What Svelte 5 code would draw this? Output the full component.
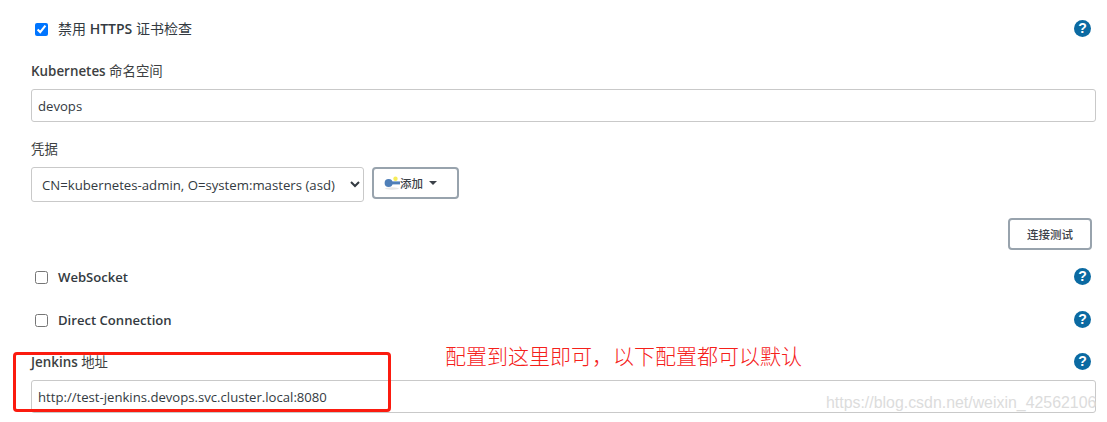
<script>
  const helpLabel = '?';
</script>

<div class="page">
  <div class="check-row first">
    <label class="check"><input type="checkbox" checked /><span class="big">禁用 <b>HTTPS</b> 证书检查</span></label>
    <span class="help">{helpLabel}</span>
  </div>

  <div class="field ns">
    <div class="label"><b>Kubernetes</b> 命名空间</div>
    <input class="text" type="text" value="devops" />
  </div>

  <div class="field cred">
    <div class="label">凭据</div>
    <div class="cred-row">
      <select class="sel">
        <option>CN=kubernetes-admin, O=system:masters (asd)</option>
      </select>
      <button class="btn add" type="button">
        <svg class="key" width="16" height="14" viewBox="0 0 16 14" aria-hidden="true">
          <ellipse cx="8" cy="12.5" rx="7" ry="1.2" fill="#e6e6e6" />
          <circle cx="4.6" cy="7" r="4" fill="#4f7fb8" />
          <rect x="6" y="5.4" width="10" height="3" fill="#4f7fb8" />
          <circle cx="11.5" cy="2.8" r="2.2" fill="#f6ec5a" />
        </svg><span>添加</span><i class="caret"></i>
      </button>
    </div>
  </div>

  <div class="test-row">
    <button class="btn test" type="button">连接测试</button>
  </div>

  <div class="check-row ws">
    <label class="check"><input type="checkbox" /><span class="strong">WebSocket</span></label>
    <span class="help">{helpLabel}</span>
  </div>

  <div class="check-row dc">
    <label class="check"><input type="checkbox" /><span class="strong">Direct Connection</span></label>
    <span class="help">{helpLabel}</span>
  </div>

  <div class="field jenkins">
    <div class="label-row">
      <div class="label"><b>Jenkins</b> 地址</div>
      <span class="help">{helpLabel}</span>
    </div>
    <input class="text" type="text" value="http://test-jenkins.devops.svc.cluster.local:8080" />
  </div>

  <div class="redbox"></div>
  <div class="note">配置到这里即可，以下配置都可以默认</div>
  <div class="mark">https://blog.csdn.net/weixin_42562106</div>
</div>

<style>
  :global(body) {
    margin: 0;
    background: #fff;
  }
  .page {
    position: relative;
    width: 1107px;
    height: 422px;
    box-sizing: border-box;
    padding: 0 11px 0 31px;
    overflow: hidden;
    font-family: "Open Sans", "Noto Sans CJK SC", sans-serif;
    font-size: 13px;
    color: #333a41;
  }
  b { font-weight: 600; }
  .check-row {
    display: flex;
    align-items: center;
    justify-content: space-between;
    height: 20px;
    padding-right: 5px;
  }
  .first { padding-top: 19px; }
  .check {
    display: flex;
    align-items: center;
    gap: 10px;
  }
  .check input {
    margin: 0 0 0 4px;
    width: 13px;
    height: 13px;
  }
  .big { font-size: 14px; font-weight: 400; margin-bottom: 2px; }
  .check .strong { font-weight: 600; font-size: 13.1px; }
  .help {
    width: 17px;
    height: 17px;
    margin-bottom: 2px;
    border-radius: 50%;
    background: #0b6aa2;
    color: #fff;
    font: 700 14px/17px "Liberation Sans", sans-serif;
    text-align: center;
  }
  .label {
    font-size: 13.4px;
    line-height: 20px;
    color: #3d3f42;
  }
  .label-row {
    display: flex;
    justify-content: space-between;
    align-items: center;
    padding-right: 5px;
    margin-bottom: 8px;
  }
  .ns .label, .cred .label { margin-bottom: 8px; }
  .ns { margin-top: 22px; }
  .cred { margin-top: 17px; }
  .text {
    display: block;
    box-sizing: border-box;
    width: 100%;
    height: 33px;
    padding: 0 6px;
    border: 1px solid #c9c9c9;
    border-radius: 3px;
    background: #fff;
    font: inherit;
    font-size: 13.13px;
    color: #333a41;
    outline: none;
  }
  .cred-row {
    display: flex;
    align-items: flex-start;
    gap: 8px;
  }
  .sel {
    box-sizing: border-box;
    width: 333px;
    height: 35px;
    padding: 0 6px;
    border: 1px solid #c9c9c9;
    border-radius: 3px;
    background-color: #fff;
    font: inherit;
    font-size: 13.2px;
    color: #333a41;
  }
  .btn {
    box-sizing: border-box;
    border: 2px solid #98a3ad;
    border-radius: 4px;
    background: #fff;
    font: 500 11.5px "Open Sans", "Noto Sans CJK SC", sans-serif;
    color: #3b4148;
    padding: 0;
  }
  .add {
    display: flex;
    align-items: center;
    width: 87px;
    height: 32px;
    padding-left: 10px;
  }
  .key { flex: none; }
  .caret {
    width: 0;
    height: 0;
    margin-left: 6px;
    border-left: 4px solid transparent;
    border-right: 4px solid transparent;
    border-top: 4px solid #3b4148;
  }
  .test-row {
    display: flex;
    justify-content: flex-end;
    padding-right: 4px;
    margin-top: 16px;
  }
  .test {
    width: 84px;
    height: 32px;
  }
  .ws { margin-top: 17px; }
  .dc { margin-top: 23px; }
  .jenkins { margin-top: 22px; }
  .redbox {
    position: absolute;
    left: 13px;
    top: 352px;
    width: 378px;
    height: 60px;
    box-sizing: border-box;
    border: 3px solid #fb1b0f;
    border-radius: 4px;
  }
  .note {
    position: absolute;
    left: 445px;
    top: 341px;
    font: 300 21px/28px "Noto Sans CJK SC", sans-serif;
    color: #f5201a;
    white-space: nowrap;
  }
  .mark {
    position: absolute;
    left: 826px;
    top: 393px;
    font: 15.9px/20px "Liberation Sans", sans-serif;
    color: #dcdcdc;
    white-space: nowrap;
  }
</style>
